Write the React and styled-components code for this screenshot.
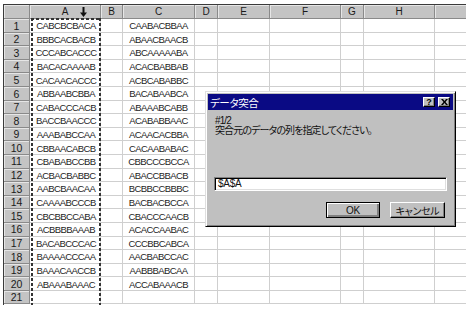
import React from 'react'
import styled, { createGlobalStyle } from 'styled-components'

const colA = [
    'CABCBCBACA', 'BBBCACBACB', 'CCCABCACCC', 'BACACAAAAB', 'CACAACACCC',
    'ABBAABCBBA', 'CABACCCACB', 'BACCBAACCC', 'AAABABCCAA', 'CBBAACABCB',
    'CBABABCCBB', 'ACBACBABBC', 'AABCBAACAA', 'CAAAABCCCB', 'CBCBBCCABA',
    'ACBBBBAAAB', 'BACABCCCAC', 'BAAAACCCAA', 'BAAACAACCB', 'ABAAABAAAC', ''
];

const colC = [
    'CAABACBBAA', 'ABAACBAACB', 'ABCAAAAABA', 'ACACBABBAB', 'ACBCABABBC',
    'BACABAABCA', 'ABAAABCABB', 'ACABABBAAC', 'ACAACACBBA', 'CACAABABAC',
    'CBBCCCBCCA', 'ABACCBBACB', 'BCBBCCBBBC', 'BACBACBCCA', 'CBACCCAACB',
    'ACACCAABAC', 'CCCBBCABCA', 'AACBABCCAC', 'AABBBABCAA', 'ACCABAAACB', ''
];

// the I column only peeks in at the right edge, its letter is off screen
const columns = ['A', 'B', 'C', 'D', 'E', 'F', 'G', 'H', ''];

const App = () => {
    return (
        <>
            <GlobalStyle />
            <Sheet>
                <Grid>
                    <Corner />
                    {columns.map((c, i) => <ColHead key={i}>{c}</ColHead>)}
                    {colA.map((a, i) => (
                        <React.Fragment key={i}>
                            <RowHead>{i + 1}</RowHead>
                            <Cell shift={2}>{a}</Cell>
                            <Cell />
                            <Cell>{colC[i]}</Cell>
                            <Cell />
                            <Cell />
                            <Cell />
                            <Cell />
                            <Cell />
                            <Cell />
                        </React.Fragment>
                    ))}
                </Grid>
                <Marquee />
                <Cursor width="7" height="10" viewBox="0 0 7 10">
                    <path d="M2.5 0h2v5.5h2.5L3.5 10 0 5.5h2.5z" fill="#111" />
                </Cursor>
            </Sheet>

            <Dialog>
                <TitleBar>
                    <Title>データ突合</Title>
                    <TitleButtons>
                        <TitleButton>?</TitleButton>
                        <TitleButton>
                            <svg width="7" height="6" viewBox="0 0 7 6">
                                <path d="M0 0h2l1.5 2 1.5-2h2L4.5 3 7 6H5L3.5 4 2 6H0l2.5-3z" fill="#000" />
                            </svg>
                        </TitleButton>
                    </TitleButtons>
                </TitleBar>
                <Body>
                    <Message>
                        <div>#1/2</div>
                        <div>突合元のデータの列を指定してください。</div>
                    </Message>
                    <RefInput>$A$A</RefInput>
                    <Buttons>
                        <Button primary>OK</Button>
                        <Button>キャンセル</Button>
                    </Buttons>
                </Body>
            </Dialog>
        </>
    )
}

const GlobalStyle = createGlobalStyle`
    html, body {
        margin: 0;
        padding: 0;
        background: #fff;
        width: 466px;
        height: 310px;
        overflow: hidden;
    }
    body {
        position: relative;
        font-family: "Liberation Sans", "Noto Sans CJK JP", sans-serif;
    }
`;

const Sheet = styled.div`
    position: relative;
    margin: 4px 0 0 3px;
    width: 463px;
    height: 301px;
    overflow: hidden;
    border-top: 1px solid #3a3a3a;
    border-left: 1px solid #3a3a3a;
    box-sizing: border-box;
`;

const Grid = styled.div`
    display: grid;
    grid-template-columns: 26px 71px 22px 72px 23px 52px 71px 23px 71px 71px;
    grid-template-rows: 14px repeat(21, 13.6px);
    width: max-content;
`;

const HeadBase = styled.div`
    background: #c4c4c4;
    border-right: 1px solid #8a8a8a;
    border-bottom: 1px solid #8a8a8a;
    box-shadow: inset 1px 1px 0 #e6e6e6;
    box-sizing: border-box;
    display: flex;
    align-items: center;
    justify-content: center;
    font-size: 10px;
    color: #1a1a1a;
    line-height: 1;
`;

const Corner = styled(HeadBase)``;

const ColHead = styled(HeadBase)`
    padding-top: 1px;
`;

const RowHead = styled(HeadBase)`
    font-size: 10.5px;
    padding-top: 1px;
`;

const Cell = styled.div`
    border-right: 1px solid #cfcfcf;
    border-bottom: 1px solid #cfcfcf;
    box-sizing: border-box;
    display: flex;
    align-items: center;
    justify-content: center;
    font-size: 9.5px;
    letter-spacing: -0.6px;
    color: #1c1c1c;
    padding: 1px 0 0 ${props => props.shift || 0}px;
    white-space: nowrap;
`;

const Marquee = styled.div`
    position: absolute;
    left: 27px;
    top: 13px;
    width: 70px;
    height: 300px;
    box-sizing: border-box;
    background:
        repeating-linear-gradient(to bottom, #333 0 3px, transparent 3px 5px) left top / 2px 100% no-repeat,
        repeating-linear-gradient(to bottom, #333 0 3px, transparent 3px 5px) right top / 2px 100% no-repeat,
        repeating-linear-gradient(to right, #333 0 3px, transparent 3px 5px) left top / 100% 2px no-repeat;
`;

const Cursor = styled.svg`
    position: absolute;
    left: 76px;
    top: 2px;
`;

const Dialog = styled.div`
    position: absolute;
    left: 205px;
    top: 91px;
    width: 251px;
    height: 136px;
    box-sizing: border-box;
    background: #c0c0c0;
    border: 1px solid;
    border-color: #dfdfdf #000 #000 #dfdfdf;
    box-shadow: inset 1px 1px 0 #fff, inset -1px -1px 0 #808080;
    padding: 2px;
    display: flex;
    flex-direction: column;
    font-family: "Liberation Sans", "Noto Sans CJK JP", sans-serif;
    font-feature-settings: "palt";
`;

const TitleBar = styled.div`
    height: 16px;
    background: #0a0a84;
    display: flex;
    align-items: center;
    justify-content: space-between;
    padding: 0 3px 0 2px;
`;

const Title = styled.span`
    color: #fff;
    font-size: 10.5px;
    letter-spacing: -0.4px;
`;

const TitleButtons = styled.div`
    display: flex;
    gap: 3px;
`;

const TitleButton = styled.div`
    width: 12px;
    height: 10px;
    box-sizing: border-box;
    background: #c0c0c0;
    border: 1px solid;
    border-color: #fff #000 #000 #fff;
    box-shadow: inset -1px -1px 0 #808080;
    display: flex;
    align-items: center;
    justify-content: center;
    font-size: 9px;
    font-weight: bold;
    line-height: 1;
    color: #000;
`;

const Body = styled.div`
    flex: 1;
    display: flex;
    flex-direction: column;
    padding: 6px 6px 6px 7px;
`;

const Message = styled.div`
    font-size: 10px;
    line-height: 10px;
    color: #111;
    letter-spacing: -0.9px;
`;

const RefInput = styled.div`
    margin-top: 41px;
    margin-left: -1px;
    height: 14px;
    box-sizing: border-box;
    background: #fff;
    border: 1px solid;
    border-color: #808080 #fff #fff #808080;
    box-shadow: inset 1px 1px 0 #000, inset -1px -1px 0 #dfdfdf;
    font-size: 10px;
    line-height: 12px;
    padding: 0 3px;
    color: #111;
    letter-spacing: -0.3px;
`;

const Buttons = styled.div`
    margin-top: 11px;
    display: flex;
    justify-content: flex-end;
    gap: 10px;
    padding-right: 2px;
`;

const Button = styled.div`
    width: ${props => props.primary ? '54px' : '55px'};
    height: 16px;
    box-sizing: border-box;
    background: #c0c0c0;
    border: 1px solid;
    border-color: ${props => props.primary ? '#000' : '#fff #000 #000 #fff'};
    box-shadow: ${props => props.primary
        ? 'inset 1px 1px 0 #fff, inset -1px -1px 0 #808080, inset -2px -2px 0 #808080'
        : 'inset -1px -1px 0 #808080'};
    display: flex;
    align-items: center;
    justify-content: center;
    font-size: 10px;
    color: #111;
    letter-spacing: -0.3px;
`;

export default App;
